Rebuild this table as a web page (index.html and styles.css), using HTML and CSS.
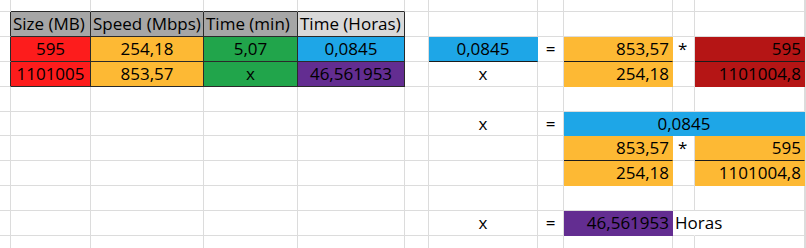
FILE: index.html
```html
<!DOCTYPE html>
<html>
<head>
<meta charset="utf-8">
<link rel="stylesheet" href="styles.css">
</head>
<body>
<div class="sheet">
  <!-- row 0 -->
  <div class="c"></div><div class="c top"></div><div class="c top"></div><div class="c top"></div><div class="c top"></div><div class="c"></div><div class="c"></div><div class="c"></div><div class="c"></div><div class="c"></div><div class="c"></div><div class="c"></div>
  <!-- row 1 header -->
  <div class="c lft"></div>
  <div class="c tbl hd gray">Size (MB)</div>
  <div class="c tbl hd gray">Speed (Mbps)</div>
  <div class="c tbl hd gray">Time (min)</div>
  <div class="c tbl hd silver">Time (Horas)</div>
  <div class="c"></div><div class="c"></div><div class="c"></div><div class="c"></div><div class="c"></div><div class="c"></div><div class="c"></div>
  <!-- row 2 -->
  <div class="c lft"></div>
  <div class="c tbl ctr red">595</div>
  <div class="c tbl ctr gold">254,18</div>
  <div class="c tbl ctr green">5,07</div>
  <div class="c tbl ctr blue">0,0845</div>
  <div class="c"></div>
  <div class="c fill ctr blue bb">0,0845</div>
  <div class="c ctr">=</div>
  <div class="c fill rgt gold bb">853,57</div>
  <div class="c lt">*</div>
  <div class="c fill rgt maroon bb">595</div>
  <div class="c"></div>
  <!-- row 3 -->
  <div class="c lft"></div>
  <div class="c tbl ctr red">1101005</div>
  <div class="c tbl ctr gold">853,57</div>
  <div class="c tbl ctr green">x</div>
  <div class="c tbl ctr purple">46,561953</div>
  <div class="c"></div>
  <div class="c ctr">x</div>
  <div class="c"></div>
  <div class="c fill rgt gold">254,18</div>
  <div class="c"></div>
  <div class="c fill rgt maroon">1101004,8</div>
  <div class="c"></div>
  <!-- row 4 -->
  <div class="c"></div><div class="c"></div><div class="c"></div><div class="c"></div><div class="c"></div><div class="c"></div><div class="c"></div><div class="c"></div><div class="c"></div><div class="c"></div><div class="c"></div><div class="c"></div>
  <!-- row 5 -->
  <div class="c short"></div><div class="c short"></div><div class="c short"></div><div class="c short"></div><div class="c short"></div><div class="c short"></div>
  <div class="c short ctr">x</div>
  <div class="c short ctr">=</div>
  <div class="c short fill ctr blue merge3">0,0845</div>
  <div class="c short"></div>
  <!-- row 6 -->
  <div class="c"></div><div class="c"></div><div class="c"></div><div class="c"></div><div class="c"></div><div class="c"></div><div class="c"></div><div class="c"></div>
  <div class="c fill rgt gold bb">853,57</div>
  <div class="c lt">*</div>
  <div class="c fill rgt gold bb">595</div>
  <div class="c"></div>
  <!-- row 7 -->
  <div class="c"></div><div class="c"></div><div class="c"></div><div class="c"></div><div class="c"></div><div class="c"></div><div class="c"></div><div class="c"></div>
  <div class="c fill rgt gold">254,18</div>
  <div class="c"></div>
  <div class="c fill rgt gold">1101004,8</div>
  <div class="c"></div>
  <!-- row 8 -->
  <div class="c"></div><div class="c"></div><div class="c"></div><div class="c"></div><div class="c"></div><div class="c"></div><div class="c"></div><div class="c"></div><div class="c"></div><div class="c"></div><div class="c"></div><div class="c"></div>
  <!-- row 9 -->
  <div class="c"></div><div class="c"></div><div class="c"></div><div class="c"></div><div class="c"></div><div class="c"></div>
  <div class="c ctr">x</div>
  <div class="c ctr">=</div>
  <div class="c fill rgt purple">46,561953</div>
  <div class="c lt spill">Horas</div>
  <div class="c"></div>
  <div class="c"></div>
  <!-- row 10 -->
  <div class="c"></div><div class="c"></div><div class="c"></div><div class="c"></div><div class="c"></div><div class="c"></div><div class="c"></div><div class="c"></div><div class="c"></div><div class="c"></div><div class="c"></div><div class="c"></div>
</div>
</body>
</html>
```
FILE: styles.css
```css
html, body {
  margin: 0;
  padding: 0;
  background: #ffffff;
  overflow: hidden;
}

.sheet {
  display: grid;
  grid-template-columns: 11px 80px 113px 94px 107px 24px 109px 26px 109px 22px 110px 1px;
  grid-auto-rows: 25px;
  grid-template-rows: 12px 25px 25px 25px 25px 24px 25px 25px 25px 25px 13px;
  width: 806px;
  font-family: "Open Sans", Lato, sans-serif;
  font-size: 17px;
  color: #000000;
}

.c {
  box-sizing: border-box;
  border-right: 1px solid #dcdcdc;
  border-bottom: 1px solid #dcdcdc;
  line-height: 24px;
  white-space: nowrap;
  overflow: hidden;
  min-width: 0;
}

.short { line-height: 23px; }

.top { border-bottom-color: #2a2a2a; }
.lft { border-right-color: #2a2a2a; }
.tbl { border-right-color: #2a2a2a; border-bottom-color: #2a2a2a; }
.fill { border-color: transparent; }
.bb { border-bottom-color: #1c1c1c; }

.hd { padding-left: 2px; }
.ctr { text-align: center; }
.rgt { text-align: right; padding-right: 3px; }
.lt { text-align: left; padding-left: 5px; }

.spill { overflow: visible; border-right-color: transparent; padding-left: 2px; }
.merge3 { grid-column: span 3; }

.gray { background: #a6a6a6; }
.silver { background: #d9d9d9; }
.red { background: #fd1c1c; }
.gold { background: #fdb934; }
.green { background: #21a54b; }
.blue { background: #1ea6e7; }
.purple { background: #632d91; }
.maroon { background: #b51515; }
```
